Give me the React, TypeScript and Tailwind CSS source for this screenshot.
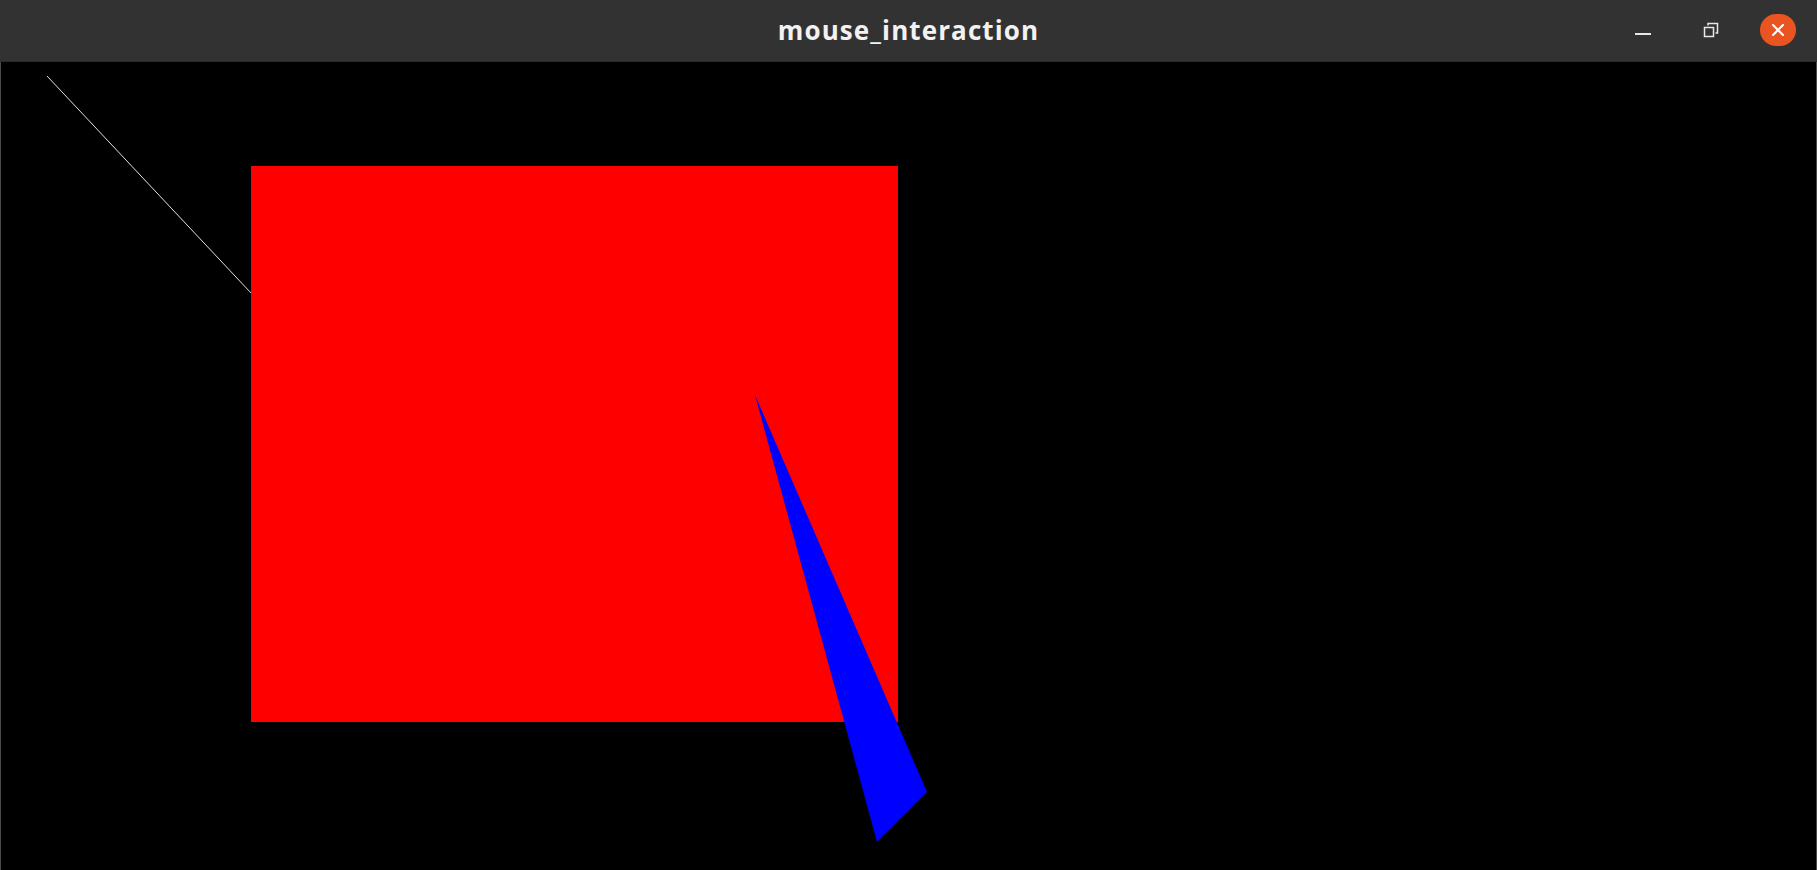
import { X } from 'lucide-react';

const TitleBar = () => {
  return (
    <div className="relative flex h-[62px] flex-shrink-0 items-center justify-center border-b border-[#2a2a2a] bg-[#333232]">
      <span className="font-['Open_Sans',sans-serif] text-[26px] font-bold tracking-[1.1px] text-[#f2f2f2]">
        mouse_interaction
      </span>
      <div className="absolute right-[21px] top-[14px] flex items-center">
        <div className="mr-[34px] flex h-[32px] w-[34px] items-center justify-center">
          <div className="mt-[7px] h-[2px] w-[16px] bg-[#e8e8e8]" />
        </div>
        <div className="mr-[32px] flex h-[32px] w-[34px] items-center justify-center">
          <svg width="16" height="16" viewBox="0 0 16 16" fill="none" stroke="#e8e8e8" strokeWidth="1.5">
            <rect x="1.5" y="5.5" width="9" height="9" />
            <path d="M5 3.5V1.5h9.5V11H12.5" />
          </svg>
        </div>
        <div className="flex h-[32px] w-[36px] items-center justify-center rounded-full bg-[#e95420]">
          <X size={20} strokeWidth={2.5} color="#ffffff" />
        </div>
      </div>
    </div>
  );
};

export default function App() {
  return (
    <div className="flex h-[870px] w-[1817px] flex-col overflow-hidden bg-black">
      <TitleBar />
      <div className="flex-1 border-x border-[#4a4a4a] bg-black">
        <svg width="1815" height="808" viewBox="1 62 1815 808" className="block">
          <line x1="47" y1="76" x2="251" y2="293" stroke="#e0e0e0" strokeWidth="1" />
          <rect x="251" y="166" width="647" height="556" fill="#ff0000" />
          <polygon points="755,395 927,792 877,842" fill="#0000ff" />
        </svg>
      </div>
    </div>
  );
}
